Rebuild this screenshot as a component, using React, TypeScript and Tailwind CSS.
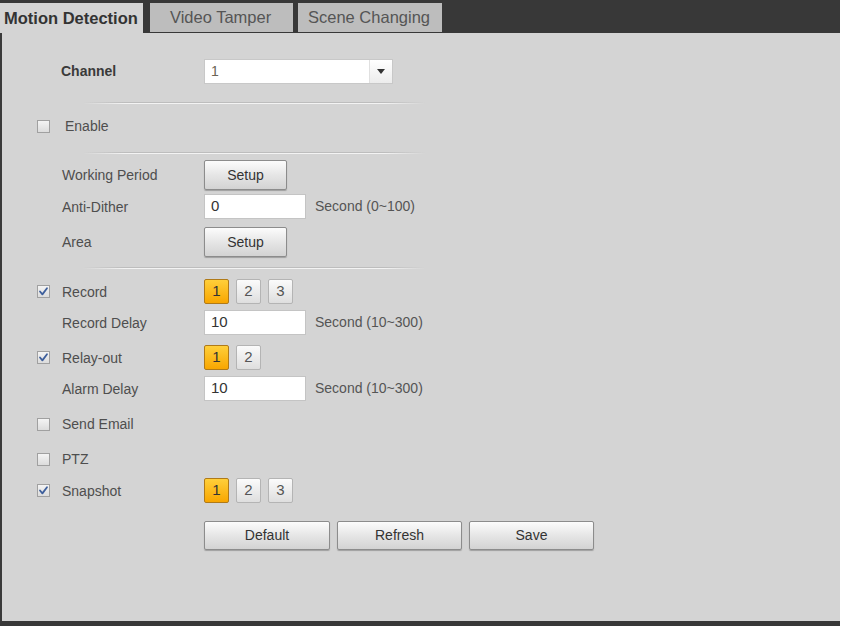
import React from "react";

const font = { fontFamily: '"Liberation Sans", Arial, sans-serif' };

function Checkbox({ checked }: { checked?: boolean }) {
  return (
    <div className="relative w-[13px] h-[13px] border border-[#a0a0a0] bg-[linear-gradient(to_bottom,#f4f4f4,#dcdcdc)] shrink-0">
      {checked && (
        <svg viewBox="0 0 13 13" className="absolute left-[-1px] top-[-1px] w-[13px] h-[13px]">
          <path d="M3 6.5 L5.4 9.4 L10 3.2" fill="none" stroke="#3e5f9c" strokeWidth="1.8" strokeLinecap="round" strokeLinejoin="round" />
        </svg>
      )}
    </div>
  );
}

function Sep() {
  return (
    <div className="ml-[81px] w-[342px] h-[2px] flex flex-col">
      <div className="h-px bg-[linear-gradient(to_right,transparent,#bdbdbd_12%,#bdbdbd_88%,transparent)]" />
      <div className="h-px bg-[linear-gradient(to_right,transparent,#f3f3f3_12%,#f3f3f3_88%,transparent)]" />
    </div>
  );
}

function Label({ children, check }: { children: React.ReactNode; check?: boolean | "none" }) {
  return (
    <div className="w-[167px] flex items-center shrink-0">
      {check === undefined ? (
        <div className="w-[25px]" />
      ) : (
        <div className="w-[25px] flex items-center">
          <Checkbox checked={check === true} />
        </div>
      )}
      <span className="text-[14px] text-[#4e4e4e] leading-none">{children}</span>
    </div>
  );
}

function Row({ h, mt, children }: { h: number; mt: number; children: React.ReactNode }) {
  return (
    <div className="flex items-center pl-[35px]" style={{ height: h, marginTop: mt }}>
      {children}
    </div>
  );
}

function SetupBtn({ w = 83, h = 30, children }: { w?: number; h?: number; children: React.ReactNode }) {
  return (
    <button
      className="border border-[#8c8c8c] rounded-[2px] bg-[linear-gradient(to_bottom,#fcfcfc,#e6e6e6_50%,#d3d3d3)] shadow-[0_1px_1px_rgba(0,0,0,0.25)] text-[14px] text-[#333] flex items-center justify-center"
      style={{ width: w, height: h }}
    >
      {children}
    </button>
  );
}

function Num({ n, on }: { n: number; on?: boolean }) {
  return on ? (
    <div className="w-[25px] h-[25px] rounded-[2px] border border-[#b07a18] bg-[linear-gradient(to_bottom,#ffcf3a,#f8a600)] text-[15px] text-[#333] flex items-center justify-center">
      {n}
    </div>
  ) : (
    <div className="w-[25px] h-[25px] rounded-[2px] border border-[#b4b4b4] bg-[linear-gradient(to_bottom,#fbfbfb,#dedede)] text-[15px] text-[#555] flex items-center justify-center">
      {n}
    </div>
  );
}

function Nums({ count }: { count: number }) {
  return (
    <div className="flex gap-[7px]">
      {Array.from({ length: count }).map((_, i) => (
        <Num key={i} n={i + 1} on={i === 0} />
      ))}
    </div>
  );
}

function Input({ value, hint }: { value: string; hint: string }) {
  return (
    <div className="flex items-center">
      <div className="w-[102px] h-[25px] bg-white border border-[#c4c4c4] flex items-center pl-[6px] text-[15px] text-[#333]">
        {value}
      </div>
      <span className="ml-[9px] text-[14px] text-[#555]">{hint}</span>
    </div>
  );
}

export default function App() {
  return (
    <div className="w-[845px] h-[629px] bg-white flex flex-col overflow-hidden" style={font}>
      <div className="w-[840px] h-[33px] bg-[#383838] flex items-end shrink-0">
        <div className="w-[143px] h-[30px] bg-[#d4d4d4] flex items-center pl-[4px] text-[16.5px] font-bold text-[#333] whitespace-nowrap">
          Motion Detection
        </div>
        <div className="ml-[7px] w-[143px] h-[29px] mb-[1px] bg-[#bdbdbd] flex items-center pl-[20px] text-[16.5px] text-[#555] whitespace-nowrap">
          Video Tamper
        </div>
        <div className="ml-[5px] w-[144px] h-[29px] mb-[1px] bg-[#bdbdbd] flex items-center pl-[10px] text-[16.5px] text-[#555] whitespace-nowrap">
          Scene Changing
        </div>
      </div>
      <div className="w-[840px] flex-1 bg-[#d4d4d4] border-l-2 border-[#3a3a3a] flex flex-col">
        <div className="flex items-center pl-[35px] h-[25px] mt-[26px]">
          <div className="w-[167px] flex items-center">
            <div className="w-[24px]" />
            <span className="text-[14px] font-bold text-[#3a3a3a]">Channel</span>
          </div>
          <div className="w-[189px] h-[25px] bg-white border border-[#c8c8c8] flex">
            <div className="flex-1 flex items-center pl-[6px] text-[14px] text-[#6b6455]">1</div>
            <div className="w-[23px] border-l border-[#e0e0e0] bg-[linear-gradient(to_bottom,#ffffff,#ececec)] flex items-center justify-center">
              <svg viewBox="0 0 8 5" className="w-[8px] h-[5px]">
                <path d="M0 0 L8 0 L4 5 Z" fill="#333" />
              </svg>
            </div>
          </div>
        </div>
        <div className="mt-[18px]" />
        <Sep />
        <Row h={20} mt={12}>
          <Checkbox />
          <span className="ml-[15px] text-[14px] text-[#4e4e4e]">Enable</span>
        </Row>
        <div className="mt-[16px]" />
        <Sep />
        <Row h={30} mt={6}>
          <Label>Working Period</Label>
          <SetupBtn>Setup</SetupBtn>
        </Row>
        <Row h={25} mt={4}>
          <Label>Anti-Dither</Label>
          <Input value="0" hint="Second (0~100)" />
        </Row>
        <Row h={30} mt={8}>
          <Label>Area</Label>
          <SetupBtn>Setup</SetupBtn>
        </Row>
        <div className="mt-[10px]" />
        <Sep />
        <Row h={25} mt={10}>
          <Label check={true}>Record</Label>
          <Nums count={3} />
        </Row>
        <Row h={25} mt={6}>
          <Label>Record Delay</Label>
          <Input value="10" hint="Second (10~300)" />
        </Row>
        <Row h={25} mt={10}>
          <Label check={true}>Relay-out</Label>
          <Nums count={2} />
        </Row>
        <Row h={25} mt={6}>
          <Label>Alarm Delay</Label>
          <Input value="10" hint="Second (10~300)" />
        </Row>
        <Row h={20} mt={13}>
          <Label check="none">Send Email</Label>
        </Row>
        <Row h={20} mt={15}>
          <Label check="none">PTZ</Label>
        </Row>
        <Row h={25} mt={9}>
          <Label check={true}>Snapshot</Label>
          <Nums count={3} />
        </Row>
        <Row h={29} mt={18}>
          <div className="w-[167px]" />
          <div className="flex gap-[7px]">
            <SetupBtn w={126} h={29}>Default</SetupBtn>
            <SetupBtn w={125} h={29}>Refresh</SetupBtn>
            <SetupBtn w={125} h={29}>Save</SetupBtn>
          </div>
        </Row>
      </div>
      <div className="w-[840px] h-[5px] bg-[#383838] shrink-0" />
      <div className="h-[3px] shrink-0" />
    </div>
  );
}
